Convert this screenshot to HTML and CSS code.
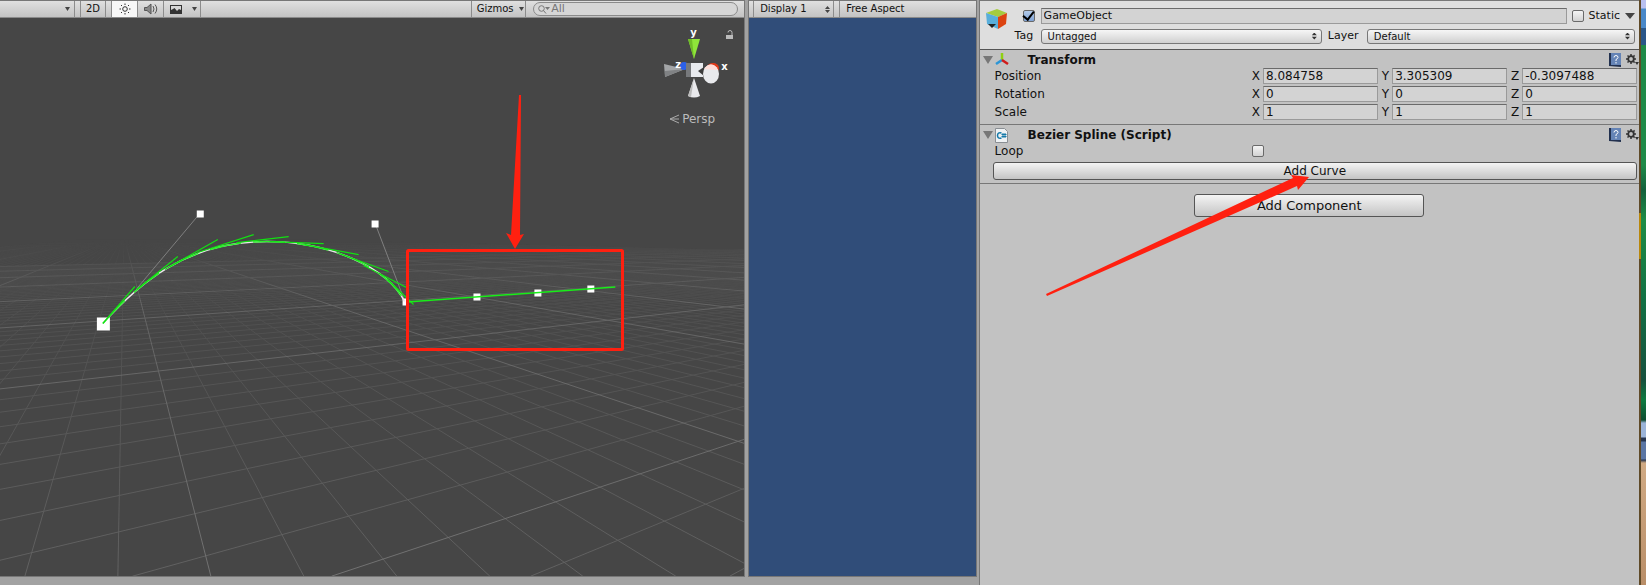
FILE: index.html
```html
<!DOCTYPE html>
<html lang="en">
<head>
<meta charset="utf-8">
<title>Bezier Spline – Editor</title>
<link rel="stylesheet" href="styles.css">
</head>
<body>
<div class="editor">
  <section class="panel scene" aria-label="Scene">
    <div class="toolbar">
      <button class="tool shading" aria-label="Shading mode"><svg width="5" height="4"><path d="M0 0h5L2.500 4z" fill="#444"/></svg></button>
      <button class="tool mode2d">2D</button>
      <span class="tools">
        <button class="tool active" aria-label="Lighting"><svg width="12" height="12" viewBox="0 0 12 12" fill="none" stroke="#333"><circle cx="6" cy="6" r="2.300"/><path d="M6 0.500v1.500M6 10v1.500M0.500 6h1.500M10 6h1.500M2 2l1 1M9 9l1 1M2 10l1-1M9 3l1-1"/></svg></button>
        <button class="tool" aria-label="Audio"><svg width="14" height="12" viewBox="0 0 14 12" fill="none" stroke="#555"><path d="M0.500 4.500v3h2.500l4 3.500V1L3 4.500z" fill="#888"/><path d="M9 3q2 3 0 6M11 1.500q3.500 4.500 0 9"/></svg></button>
        <button class="tool effects" aria-label="Effects"><svg width="12" height="9" viewBox="0 0 12 9"><path d="M0 0h12v9H0z" fill="#333"/><path d="M1 1h10v4L9 4 7 6 4.500 3 3 4 1 5z" fill="#d8d8d8"/></svg><svg class="caret" width="5" height="4"><path d="M0 0h5L2.500 4z" fill="#444"/></svg></button>
      </span>
      <button class="tool gizmos">Gizmos <svg width="5" height="4"><path d="M0 0h5L2.500 4z" fill="#444"/></svg></button>
      <label class="search"><svg width="12" height="9" viewBox="0 0 12 9" fill="none" stroke="#777"><circle cx="3.500" cy="3.500" r="2.800"/><path d="M5.500 5.500L8 8.500"/><path d="M7 2h5L9.500 5z" fill="#777" stroke="none"/></svg><input type="text" value="All" aria-label="Search scene"></label>
    </div>
    <div class="viewport">
      <svg class="world" viewBox="0 18 745 559" preserveAspectRatio="xMidYMid slice">
        <defs>
          <linearGradient id="fade" x1="0" y1="236" x2="0" y2="577" gradientUnits="userSpaceOnUse">
            <stop offset="0.010" stop-color="#000"/><stop offset="0.100" stop-color="#303030"/><stop offset="0.300" stop-color="#666"/><stop offset="1" stop-color="#fff"/>
          </linearGradient>
          <linearGradient id="fadeMajor" x1="0" y1="236" x2="0" y2="577" gradientUnits="userSpaceOnUse">
            <stop offset="0.020" stop-color="#000"/><stop offset="0.200" stop-color="#aaa"/><stop offset="1" stop-color="#fff"/>
          </linearGradient>
          <mask id="minorMask" maskUnits="userSpaceOnUse" x="0" y="236" width="745" height="341"><path d="M0 236h745v341H0z" fill="url(#fade)"/></mask>
          <mask id="majorMask" maskUnits="userSpaceOnUse" x="0" y="236" width="745" height="341"><path d="M0 236h745v341H0z" fill="url(#fadeMajor)"/></mask>
        </defs>
        <g mask="url(#minorMask)"><path id="minorGrid" fill="none" stroke="#626262"/></g>
        <g mask="url(#majorMask)"><path id="majorGrid" fill="none" stroke="#727272"/></g>
        <path d="M137 289L200 214M405 301L376 225" stroke="#808080" fill="none"/>
        <path d="M97 318h13v13H97zM197 211h7v7h-7zM372 221h7v7h-7zM403 299h6v7h-6zM474 294h7v7h-7zM535 290h7v7h-7zM588 286h7v7h-7z" fill="#fff"/>
        <path d="M103 324C137 286 185 242 267 242C330 242 388 268 405 302" fill="none" stroke="#e8e8e8" stroke-width="1.500"/>
        <path d="M103 324C137 286 185 242 267 242C330 242 388 268 405 302" fill="none" stroke="#2cf02c" stroke-width="1.500" stroke-dasharray="32 12"/>
        <path d="M103 324L135 287M137 290L178 257M165 270L218 240M198 253L254 235M237 243L289 237M270 242L324 244M305 245L359 255M337 253L389 272M364 266L407 288M388 280L414 305" fill="none" stroke="#12e012" stroke-width="1.200"/>
        <path d="M407 302.500L616 287.500" fill="none" stroke="#18ee18" stroke-width="1.500"/>
      </svg>
      <div class="orient">
        <svg width="80" height="104" viewBox="0 0 80 104">
          <path d="M25 21h12L31 41z" fill="#8fe53a"/><path d="M25 21h4l2 20z" fill="#70bd28"/>
          <path d="M1 46L22 51 2 59z" fill="#a3a5a7"/><path d="M2 53L22 51 2 59z" fill="#808284"/>
          <circle cx="21" cy="48" r="4" fill="#2c60e8"/><path d="M23 45h5v14h-5z" fill="#77797c"/><path d="M28 45h12v14H28z" fill="#e8eaee"/>
          <path d="M35 53l6-4v9z" fill="#3c3c3c"/><ellipse cx="50" cy="50" rx="6" ry="5" fill="#e23a18"/><ellipse cx="48" cy="56" rx="8" ry="9.500" fill="#e9eaed"/><path d="M41 51q5-7 11-3l3 4z" fill="#ffdfda"/>
          <path d="M31 60l6 18q-6 3-12 0z" fill="#e9e9ec"/><path d="M31 60l-3 19-3-1z" fill="#bbb"/>
        </svg>
        <span class="axis y">y</span><span class="axis x">x</span><span class="axis z">z</span>
        <svg class="lock" width="8" height="10" viewBox="0 0 8 10"><path d="M0 5h7v4H0z" fill="#bbb"/><path d="M2 2.500q0-2 2-2t2 2V5" fill="none" stroke="#bbb"/></svg>
        <span class="persp"><svg width="10" height="10" viewBox="0 0 10 10" fill="none" stroke="#aaa"><path d="M10 1L1 5l9 4M1 5h9"/></svg>Persp</span>
      </div>
    </div>
  </section>

  <section class="panel game" aria-label="Game">
    <div class="toolbar">
      <button class="tool display">Display 1 <svg width="5" height="7" viewBox="0 0 5 7"><path d="M0 3h5L2.500 0zM0 4h5L2.500 7z" fill="#444"/></svg></button>
      <button class="tool aspect">Free Aspect</button>
    </div>
    <div class="camera"></div>
  </section>

  <section class="inspector" aria-label="Inspector">
    <header class="object">
      <svg class="cube" width="22" height="22" viewBox="0 0 22 22"><path d="M0 5L11 1l10 4-9 4z" fill="#a5cc3f"/><path d="M0 5l12 4v12L1 16z" fill="#58aedb"/><path d="M12 9l9-4-1 11-8 5z" fill="#dc4310"/><path d="M2 16h8l-4 4z" fill="#222"/></svg>
      <div class="object-fields">
        <div class="line">
          <input class="check" type="checkbox" checked aria-label="Active">
          <input class="field name" type="text" value="GameObject" aria-label="Name">
          <label class="static"><input class="check" type="checkbox">Static</label>
          <svg width="10" height="6"><path d="M0 0h10L5 6z" fill="#444"/></svg>
        </div>
        <div class="line second">
          <label class="tag" for="tag">Tag</label>
          <span class="pick tag-pick"><select id="tag"><option>Untagged</option></select></span>
          <label class="layer" for="layer">Layer</label>
          <span class="pick layer-pick"><select id="layer"><option>Default</option></select></span>
        </div>
      </div>
    </header>

    <section class="component">
      <div class="title">
        <svg width="10" height="8"><path d="M0 0h10L5 8z" fill="#777"/></svg>
        <svg class="kind" width="14" height="14" viewBox="0 0 14 14" fill="none" stroke-width="2.500"><path d="M7 8V0" stroke="#8fd012"/><path d="M7 7L1 11" stroke="#2b95d6"/><path d="M7 7l6 4" stroke="#d01a1a"/></svg>
        <h2>Transform</h2>
        <svg class="help" width="14" height="14" viewBox="0 0 14 14"><path d="M1 0h2v12h10v2L1 13z" fill="#22314f"/><path d="M3 0h10v12H3z" fill="#6584b6"/><path d="M6 4.500q0-2 2-2t2 2q0 1-2 2v1.500M8 9v1.500" stroke="#fff" fill="none"/></svg>
        <svg class="gear" width="13" height="12" viewBox="0 0 13 12"><g fill="none" stroke="#333"><circle cx="5" cy="5" r="2.800" stroke-width="1.800"/><path d="M5 0v2M5 8v2M0 5h2M8 5h2M1.500 1.500l1.300 1.300M7.300 7.300l1.300 1.300M1.500 8.500l1.300-1.300M7.300 2.700l1.300-1.300" stroke-width="1.500"/></g><path d="M9 8h4l-2 3z" fill="#333"/></svg>
      </div>
      <div class="prop"><span>Position</span><div class="vector"><label>X<input class="field" value="8.084758"></label><label>Y<input class="field" value="3.305309"></label><label>Z<input class="field" value="-0.3097488"></label></div></div>
      <div class="prop"><span>Rotation</span><div class="vector"><label>X<input class="field" value="0"></label><label>Y<input class="field" value="0"></label><label>Z<input class="field" value="0"></label></div></div>
      <div class="prop"><span>Scale</span><div class="vector"><label>X<input class="field" value="1"></label><label>Y<input class="field" value="1"></label><label>Z<input class="field" value="1"></label></div></div>
    </section>

    <section class="component">
      <div class="title">
        <svg width="10" height="8"><path d="M0 0h10L5 8z" fill="#777"/></svg>
        <svg class="kind" width="14" height="15" viewBox="0 0 14 15"><path d="M0.500 0.500h9l3 3v11h-12z" fill="#eef1f3" stroke="#8a8f94"/><path d="M6.500 5q-4-1-4 2.500t4 2.500" fill="none" stroke="#1479a8" stroke-width="1.500"/><path d="M8 5v5M10 5v5M6.500 6.500h5M6.500 8.500h5" stroke="#1479a8"/></svg>
        <h2>Bezier Spline (Script)</h2>
        <svg class="help" width="14" height="14" viewBox="0 0 14 14"><path d="M1 0h2v12h10v2L1 13z" fill="#22314f"/><path d="M3 0h10v12H3z" fill="#6584b6"/><path d="M6 4.500q0-2 2-2t2 2q0 1-2 2v1.500M8 9v1.500" stroke="#fff" fill="none"/></svg>
        <svg class="gear" width="13" height="12" viewBox="0 0 13 12"><g fill="none" stroke="#333"><circle cx="5" cy="5" r="2.800" stroke-width="1.800"/><path d="M5 0v2M5 8v2M0 5h2M8 5h2M1.500 1.500l1.300 1.300M7.300 7.300l1.300 1.300M1.500 8.500l1.300-1.300M7.300 2.700l1.300-1.300" stroke-width="1.500"/></g><path d="M9 8h4l-2 3z" fill="#333"/></svg>
      </div>
      <div class="prop"><label for="loop">Loop</label><input class="check" id="loop" type="checkbox"></div>
      <button class="push curve">Add Curve</button>
    </section>
    <button class="push add">Add Component</button>
  </section>

  <div class="desktop" aria-hidden="true"><i class="edge"></i><i class="wall"></i></div>

  <svg class="notes" viewBox="0 0 1646 585" preserveAspectRatio="none" aria-hidden="true">
    <rect x="407.500" y="250.500" width="215" height="99" rx="1" fill="none" stroke="#ff2010" stroke-width="3"/>
    <path d="M519 95h2l-1 140 4-1-9 15-9-16 5 2z" fill="#ff2010"/>
    <path d="M1046 294L1293 178 1291 175 1309 177 1298 190 1297 186 1047 296z" fill="#ff2010"/>
  </svg>
</div>
<script src="grid.js"></script>
</body>
</html>
```
FILE: styles.css
```css
* { box-sizing: border-box; }
body { margin: 0; font: 11px/16px "DejaVu Sans", sans-serif; color: #111; background: #a2a2a2; }
button, input, select { font: inherit; color: inherit; margin: 0; padding: 0; border-radius: 0; }
svg { flex: none; display: block; }

.editor { position: relative; display: flex; min-height: 100vh; overflow: hidden; background: #a2a2a2; }
.panel { display: flex; flex-direction: column; margin-bottom: 8px; border: solid #777; border-width: 1px 1px 1px 0; min-width: 0; }
.scene { flex: 746; }
.game { flex: 227; margin-left: 3px; border-left-width: 1px; }

.toolbar { display: flex; height: 17px; border-bottom: 1px solid #8a8a8a; background: linear-gradient(#e0e0e0, #c3c3c3); font-size: 10px; }
.tool { display: flex; align-items: center; justify-content: center; gap: 5px; height: 16px; border: 0; border-right: 1px solid #8c8c8c; background: none; white-space: nowrap; }
.shading { width: 75px; justify-content: flex-end; padding-right: 4px; }
.mode2d { width: 26px; margin-left: 5px; border-left: 1px solid #8c8c8c; font-size: 10px; }
.tools { display: flex; margin-left: 5px; border-left: 1px solid #8c8c8c; }
.tools .tool { width: 26px; }
.tools .active { background: #f8f8f8; }
.tools .effects { width: 37px; gap: 7px; padding-left: 3px; }
.caret { margin-left: 3px; }
.gizmos { margin-left: auto; width: 55px; padding-left: 3px; border-left: 1px solid #8c8c8c; }
.search { display: flex; align-items: center; gap: 1px; width: 205px; height: 14px; margin: 1px 6px 0 7px; padding: 0 4px; border: 1px solid #8a8a8a; border-radius: 7px; background: #d6d6d6; color: #777; }
.search input { flex: 1; min-width: 0; height: 12px; border: 0; background: none; font-size: 11px; outline: 0; }
.display { width: 81px; margin-left: 4px; border-left: 1px solid #8c8c8c; justify-content: space-between; padding: 0 3px 0 6px; }
.aspect { flex: 1; margin-left: 5px; border-left: 1px solid #8c8c8c; border-right: 0; justify-content: flex-start; padding-left: 6px; }

.viewport { position: relative; flex: 1; background: #464646; }
.world { position: absolute; inset: 0; width: 100%; height: 100%; }
.orient { position: absolute; top: 0; right: 0; width: 81px; height: 110px; color: #bbb; }
.axis { position: absolute; color: #fff; font-weight: 700; font-size: 10px; line-height: 12px; }
.axis.y { left: 27px; top: 9px; }
.axis.x { left: 58px; top: 43px; }
.axis.z { left: 12px; top: 41px; }
.lock { position: absolute; left: 63px; top: 12px; }
.persp { position: absolute; left: 6px; top: 93px; display: flex; align-items: center; gap: 3px; font-size: 12px; }
.camera { flex: 1; background: #304d79; }

.inspector { flex: 661; min-width: 0; margin-left: 2px; border-top: 1px solid #777; border-left: 1px solid #777; background: #c2c2c2; }
.object { display: flex; align-items: flex-start; gap: 15px; height: 49px; padding: 7px 4px 0 6px; border-bottom: 1px solid #555; background: #dedede; }
.object-fields { flex: 1; min-width: 0; }
.line { display: flex; align-items: center; height: 16px; }
.second { margin-top: 4px; }
.check { appearance: none; display: block; flex: none; width: 12px; height: 12px; border: 1px solid #6a6a6a; border-radius: 2px; background: linear-gradient(#f4f4f4, #d2d2d2); }
.check:checked { display: grid; place-items: center; background: linear-gradient(#b4cbe9, #7fa3d6); }
.check:checked::before { content: ""; width: 5px; height: 9px; margin-top: -3px; border: solid #000; border-width: 0 2px 2px 0; transform: rotate(38deg); }
.field { min-width: 0; height: 16px; padding: 0 2px; border: 1px solid #9a9a9a; border-top-color: #6a6a6a; background: #d3d3d3; outline: 0; }
.name { flex: 1; margin: 0 5px 0 6px; }
.static { display: flex; align-items: center; gap: 5px; margin-right: 5px; }
.tag { width: 24px; margin-left: -8px; }
.pick { position: relative; display: flex; height: 15px; }
.pick::after { content: ""; position: absolute; right: 5px; top: 4px; width: 5px; height: 7px; background: #333; clip-path: polygon(50% 0, 100% 40%, 0 40%, 0 60%, 100% 60%, 50% 100%, 0 60%, 0 40%); }
.pick select { appearance: none; width: 100%; height: 15px; padding: 0 6px; border: 1px solid #777; border-radius: 3px; background: linear-gradient(#f6f6f6, #d0d0d0); font-size: 10px; line-height: 13px; }
.tag-pick { flex: 281; margin-left: 2px; }
.layer { width: 39px; margin-left: 6px; }
.layer-pick { flex: 268; }

.component { padding-bottom: 2px; border-bottom: 1px solid #777; }
.component + .component { padding-bottom: 3px; }
.title { display: flex; align-items: center; height: 18px; padding: 2px 0 0 3px; }
.kind { margin-left: 2px; width: 14px; }
.title h2 { flex: 1; margin: 0 0 0 19px; font-size: 12px; line-height: 16px; }
.gear { margin-left: 4px; }
.prop { display: grid; grid-template-columns: minmax(0, 257fr) minmax(0, 385fr); align-items: center; height: 18px; padding: 0 2px 2px 15px; font-size: 12px; }
.vector { display: grid; grid-template-columns: minmax(0, 126fr) minmax(0, 125fr) minmax(0, 126fr); gap: 4px; }
.vector label { display: flex; align-items: center; }
.vector .field { flex: 1; margin-left: 3px; }
.push { display: block; border: 1px solid #555; border-radius: 3px; background: linear-gradient(#f4f4f4, #c4c4c4); }
.curve { width: calc(100% - 15px); height: 18px; margin: 1px 0 0 13px; font-size: 12px; line-height: 14px; }
.add { width: 230px; height: 23px; margin: 10px auto 0; font-size: 13px; line-height: 18px; }

.desktop { display: flex; width: 7px; flex: none; }
.edge { width: 2px; background: linear-gradient(#5f4a28 213px, #b8860b 213px 259px, #5f4a28 259px); }
.wall { flex: 1; background: linear-gradient(#b9c0f0 8px, #4a88c8 9px 28px, #2a5688 28px 45px, #1f8a48 45px 165px, #14603c 190px, #1e8c46 220px, #127044 300px, #17503e 380px, #0e7a40 400px, #0e4c30 420px, #9cb4d8 423px 437px, #26344e 438px 441px, #5b76a4 442px 459px, #26344e 460px, #d0aa84 463px, #b98e68); }
.notes { position: absolute; inset: 0; width: 100%; height: 100%; pointer-events: none; }
```
FILE: grid.js
```js
// Ground plane: two pencils of lines meeting at vanishing points on the horizon.
const HORIZON = 236;
const BOTTOM = 577;
const families = [
  { vx: 124, cot: 0.2554, step: 0.273, from: -40, to: 150 },
  { vx: 1360, cot: -3.015, step: -0.5845, from: -8, to: 70 }
];
const paths = { minor: "", major: "" };
for (const f of families) {
  for (let i = f.from; i <= f.to; i++) {
    const x = f.vx + (BOTTOM - HORIZON) * (f.cot + i * f.step);
    paths[i % 10 === 0 ? "major" : "minor"] += `M${f.vx} ${HORIZON}L${x.toFixed(1)} ${BOTTOM}`;
  }
}
document.getElementById("minorGrid").setAttribute("d", paths.minor);
document.getElementById("majorGrid").setAttribute("d", paths.major);
```
